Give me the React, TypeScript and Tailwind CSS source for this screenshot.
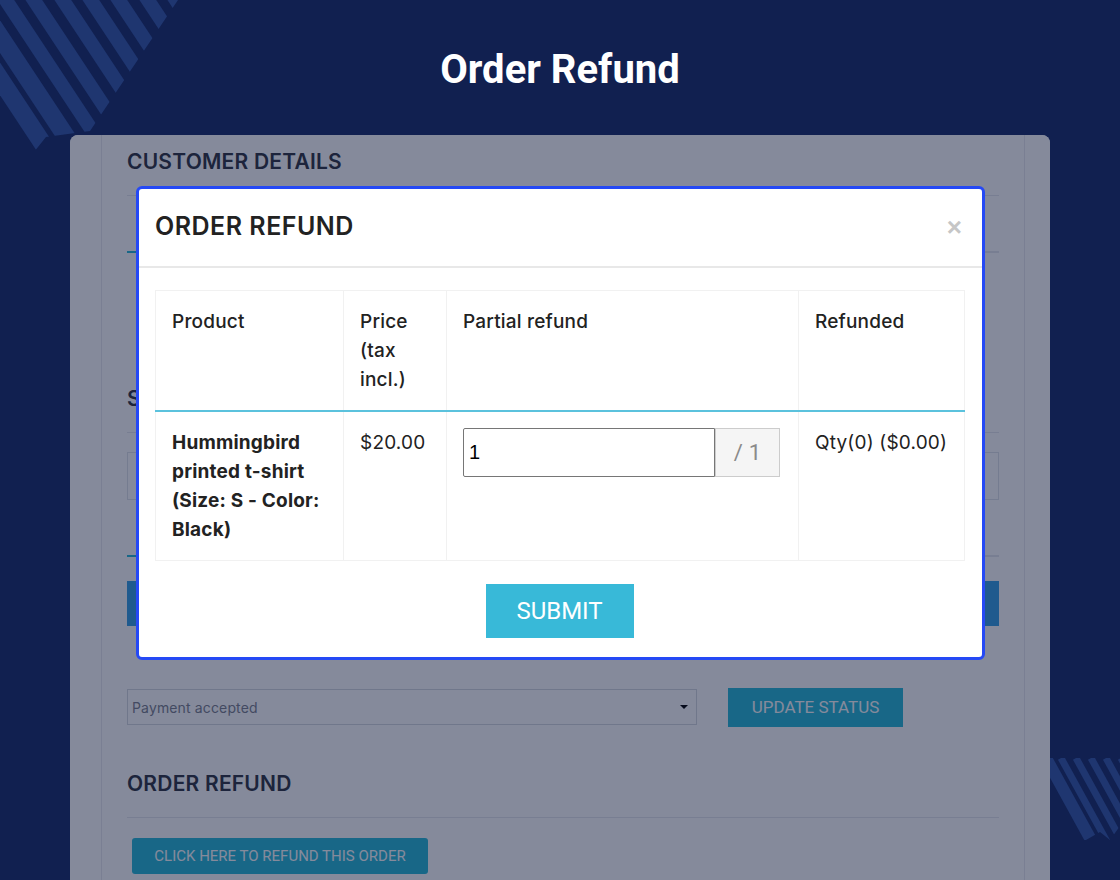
// 返金モーダル表示中の注文詳細ページ
// 背景のカードはオーバーレイで暗くし、その上に返金フォームのモーダルを重ねる。

const STRIPE_OFFSETS = [-52, -24, 6, 34, 63, 91, 119, 148, 176];

function CornerStripes() {
  return (
    <svg width="200" height="170" viewBox="0 0 200 170" className="absolute left-0 top-0">
      <defs>
        <clipPath id="stripe-cut-top">
          <polygon points="0,0 178,0 90,131 46,137 30,157 0,157" />
        </clipPath>
      </defs>
      <g clipPath="url(#stripe-cut-top)" stroke="#1f3670">
        {STRIPE_OFFSETS.map((x, i) => (
          <line
            key={x}
            x1={x - 20}
            y1={-30}
            x2={x + 0.66 * 200}
            y2={200}
            strokeWidth={i < 2 ? 18 : 14}
          />
        ))}
      </g>
    </svg>
  );
}

function EdgeStripes() {
  return (
    <svg width="80" height="100" viewBox="0 0 80 100" className="absolute left-[1040px] top-[750px]">
      <defs>
        <clipPath id="stripe-cut-edge">
          <polygon points="0,8 80,8 80,76 70,90 60,82 46,90 28,90 0,60" />
        </clipPath>
      </defs>
      <g clipPath="url(#stripe-cut-edge)" stroke="#1f3670">
        {[6, 21, 36, 51, 66, 81].map((x, i) => (
          <line key={x} x1={x} y1={8} x2={x + 0.55 * 100} y2={108} strokeWidth={i === 0 ? 12 : 7} />
        ))}
      </g>
    </svg>
  );
}

function SectionTitle({ children }: { children: React.ReactNode }) {
  return (
    <h2 className="text-[21px] font-semibold leading-[28px] tracking-[0.01em] text-[#2e3340]">{children}</h2>
  );
}

function TabLine() {
  return (
    <div className="h-[2px] bg-[#e4e6ec]">
      <div className="h-full w-[140px] bg-[#25b9d7]" />
    </div>
  );
}

function OrderPage() {
  return (
    <div className="relative mx-auto mt-[41px] h-[745px] w-[980px] overflow-hidden rounded-t-lg bg-white">
      <div className="ml-[31px] mr-[25px] h-full border-x border-[#e8e9ef] px-[25px] pt-[13px]">
        <SectionTitle>CUSTOMER DETAILS</SectionTitle>
        <div className="mt-[19px] border-t border-[#e4e6ec]" />
        <div className="mt-[55px]">
          <TabLine />
        </div>

        <div className="mt-[132px]">
          <SectionTitle>STATUS</SectionTitle>
        </div>
        <div className="mt-[19px] border-t border-[#e4e6ec]" />
        <div className="mt-[19px] h-[48px] border border-[#dfe2e8]" />
        <div className="mt-[55px]">
          <TabLine />
        </div>
        <div className="mt-[24px] h-[45px] bg-[#339fe5]" />

        <div className="mt-[63px] flex items-start">
          <div className="flex h-[36px] w-[570px] items-center justify-between border border-[#d5d8df] pl-[4px] pr-[8px]">
            <span className="text-[14px] tracking-[0.01em] text-[#7a7f8c]">Payment accepted</span>
            <span className="h-0 w-0 border-x-[4px] border-t-[4px] border-x-transparent border-t-black" />
          </div>
          <button
            type="button"
            className="-mt-px ml-[31px] h-[39px] w-[175px] bg-[#25b9d7] font-['Roboto',sans-serif] text-[17px] text-white"
          >
            UPDATE STATUS
          </button>
        </div>

        <div className="mt-[43px]">
          <SectionTitle>ORDER REFUND</SectionTitle>
        </div>
        <div className="mt-[19px] border-t border-[#e4e6ec]" />
        <button
          type="button"
          className="ml-[5px] mt-[20px] h-[36px] w-[296px] rounded-[3px] bg-[#25b9d7] font-['Roboto',sans-serif] text-[15px] text-white"
        >
          CLICK HERE TO REFUND THIS ORDER
        </button>
      </div>

      {/* モーダル背面のオーバーレイ */}
      <div className="absolute inset-0 bg-[#0b1537]/50" />

      <RefundModal />
    </div>
  );
}

function RefundModal() {
  return (
    <div className="absolute left-[66px] top-[51px] w-[849px] rounded-md border-[3px] border-[#2549f5] bg-white">
      <div className="flex h-[79px] items-center justify-between border-b-2 border-[#e8e8e8] pb-[2px] pl-[16px] pr-[20px]">
        <h3 className="text-[25px] font-semibold tracking-[0.02em] text-[#222]">ORDER REFUND</h3>
        <span className="font-['Liberation_Sans',sans-serif] text-[26px] font-bold leading-none text-[#c6c6c6]">×</span>
      </div>

      <div className="pb-[19px] pl-[16px] pr-[18px] pt-[22px]">
        <table className="w-full table-fixed border-collapse text-[19px] leading-[29px] tracking-[0.01em] text-[#222]">
          <colgroup>
            <col className="w-[188px]" />
            <col className="w-[103px]" />
            <col className="w-[352px]" />
            <col className="w-[166px]" />
          </colgroup>
          <thead>
            <tr className="border-b-2 border-[#5bc2dd]">
              {["Product", "Price (tax incl.)", "Partial refund", "Refunded"].map((h) => (
                <th
                  key={h}
                  className="h-[120px] border-x border-t border-[#f1f1f1] p-4 text-left align-top font-medium"
                >
                  {h}
                </th>
              ))}
            </tr>
          </thead>
          <tbody>
            <tr>
              <td className="border border-[#f1f1f1] p-4 align-top font-bold">
                Hummingbird printed t-shirt (Size: S - Color: Black)
              </td>
              <td className="border border-[#f1f1f1] p-4 align-top">$20.00</td>
              <td className="border border-[#f1f1f1] py-4 pl-4 pr-[18px] align-top">
                <div className="flex h-[49px]">
                  <input
                    defaultValue="1"
                    className="min-w-0 flex-1 rounded-l-[2px] border border-[#767676] px-[5px] font-['Liberation_Sans',sans-serif] text-[20px] text-black outline-none"
                  />
                  <span className="flex w-[65px] items-center justify-center border border-[#cccccc] bg-[#f5f5f5] font-['Roboto',sans-serif] text-[22px] text-[#8a8a8a]">
                    / 1
                  </span>
                </div>
              </td>
              <td className="border border-[#f1f1f1] p-4 align-top">Qty(0) ($0.00)</td>
            </tr>
          </tbody>
        </table>

        <button
          type="button"
          className="mx-auto mt-[23px] block h-[54px] w-[148px] bg-[#38b9d8] font-['Roboto',sans-serif] text-[24px] text-white"
        >
          SUBMIT
        </button>
      </div>
    </div>
  );
}

export default function App() {
  return (
    <div className="relative h-[880px] overflow-hidden bg-[#112050] font-['Inter',sans-serif]">
      <CornerStripes />
      <EdgeStripes />
      <h1 className="relative pt-[46px] text-center font-['Roboto',sans-serif] text-[40px] font-bold leading-[48px] text-white">
        Order Refund
      </h1>
      <OrderPage />
    </div>
  );
}
